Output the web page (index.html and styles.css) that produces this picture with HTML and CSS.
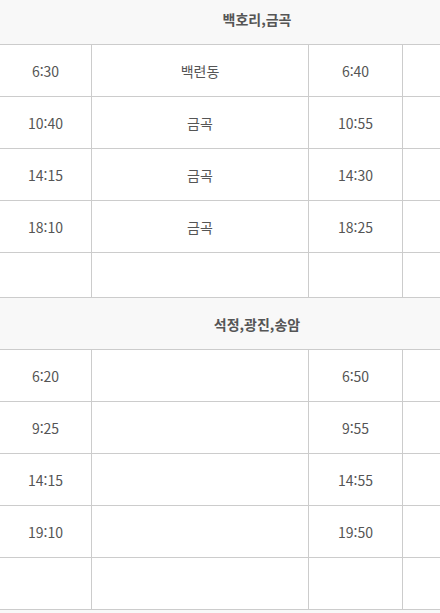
FILE: index.html
```html
<!DOCTYPE html>
<html lang="ko">
<head>
<meta charset="utf-8">
<link rel="stylesheet" href="styles.css">
</head>
<body>
<div class="viewport">
  <div class="table">
    <div class="head first">백호리,금곡</div>
    <div class="row"><div class="c c1">6:30</div><div class="c c2">백련동</div><div class="c c3">6:40</div><div class="c c4"></div></div>
    <div class="row"><div class="c c1">10:40</div><div class="c c2">금곡</div><div class="c c3">10:55</div><div class="c c4"></div></div>
    <div class="row"><div class="c c1">14:15</div><div class="c c2">금곡</div><div class="c c3">14:30</div><div class="c c4"></div></div>
    <div class="row"><div class="c c1">18:10</div><div class="c c2">금곡</div><div class="c c3">18:25</div><div class="c c4"></div></div>
    <div class="row short"><div class="c c1"></div><div class="c c2"></div><div class="c c3"></div><div class="c c4"></div></div>
    <div class="head">석정,광진,송암</div>
    <div class="row"><div class="c c1">6:20</div><div class="c c2"></div><div class="c c3">6:50</div><div class="c c4"></div></div>
    <div class="row"><div class="c c1">9:25</div><div class="c c2"></div><div class="c c3">9:55</div><div class="c c4"></div></div>
    <div class="row"><div class="c c1">14:15</div><div class="c c2"></div><div class="c c3">14:55</div><div class="c c4"></div></div>
    <div class="row"><div class="c c1">19:10</div><div class="c c2"></div><div class="c c3">19:50</div><div class="c c4"></div></div>
    <div class="row"><div class="c c1"></div><div class="c c2"></div><div class="c c3"></div><div class="c c4"></div></div>
  </div>
</div>
</body>
</html>
```
FILE: styles.css
```css
html, body {
  margin: 0;
  padding: 0;
}
body {
  background: #f8f8f8;
  font-family: "Noto Sans CJK KR", "Noto Sans", sans-serif;
  color: #555;
}
.viewport {
  width: 440px;
  height: 613px;
  overflow: hidden;
}
.table {
  width: 514px;
  margin-top: -7px;
  background: #fff;
}
.head {
  height: 52px;
  box-sizing: border-box;
  border-bottom: 1px solid #ccc;
  background: #f8f8f8;
  display: flex;
  align-items: center;
  justify-content: center;
  font-size: 14px;
  font-weight: 700;
  color: #555;
  padding-top: 1px;
}
.row {
  display: flex;
  height: 52px;
  box-sizing: border-box;
  border-bottom: 1px solid #ccc;
}
.row.short {
  height: 45px;
}
.c {
  display: flex;
  align-items: center;
  justify-content: center;
  font-size: 14px;
  color: #555;
  box-sizing: border-box;
}
.c1 { width: 91px; }
.c2 { width: 217px; border-left: 1px solid #ccc; }
.c3 { width: 94px; border-left: 1px solid #ccc; }
.c4 { flex: 1; border-left: 1px solid #ccc; }
```
